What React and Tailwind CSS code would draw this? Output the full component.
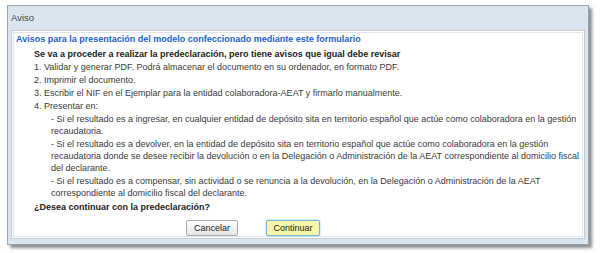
export default function App() {
  const f = { fontFamily: '"Liberation Sans", Arial, sans-serif' };
  return (
    <div className="w-[600px] h-[253px] bg-white overflow-hidden" style={f}>
      <div className="ml-[7px] mt-[5px] w-[582px] h-[240px] bg-[#dbe5ef] border border-[#9aa4ae] shadow-[3px_3px_3px_rgba(0,0,0,0.45)] flex flex-col">
        <div className="h-[25px] flex items-center pl-[3px] text-[9.5px] text-[#444]">Aviso</div>
        <div className="mx-[3px] flex-1 mb-[5px] bg-white border border-[#c3ccd6] p-[1px]">
          <div className="h-full border border-[#e2e6ea] flex flex-col text-[9px] leading-[12px] text-[#3a3a3a]">
            <div className="pl-[2px] font-bold text-[#1a5fcf]">Avisos para la presentación del modelo confeccionado mediante este formulario</div>
            <div className="pl-[20px] mt-[3px] font-bold text-[#222]">Se va a proceder a realizar la predeclaración, pero tiene avisos que igual debe revisar</div>
            <div className="pl-[20px] mt-[1px]">1. Validar y generar PDF. Podrá almacenar el documento en su ordenador, en formato PDF.</div>
            <div className="pl-[20px] mt-[1px]">2. Imprimir el documento.</div>
            <div className="pl-[20px] mt-[1px]">3. Escribir el NIF en el Ejemplar para la entidad colaboradora-AEAT y firmarlo manualmente.</div>
            <div className="pl-[20px] mt-[1px]">4. Presentar en:</div>
            <div className="pl-[37px] mt-[1px] whitespace-nowrap">- Si el resultado es a ingresar, en cualquier entidad de depósito sita en territorio español que actúe como colaboradora en la gestión<br />recaudatoria.</div>
            <div className="pl-[37px] mt-[1px] whitespace-nowrap">- Si el resultado es a devolver, en la entidad de depósito sita en territorio español que actúe como colaboradora en la gestión<br />recaudatoria donde se desee recibir la devolución o en la Delegación o Administración de la AEAT correspondiente al domicilio fiscal<br />del declarante.</div>
            <div className="pl-[37px] mt-[1px] whitespace-nowrap">- Si el resultado es a compensar, sin actividad o se renuncia a la devolución, en la Delegación o Administración de la AEAT<br />correspondiente al domicilio fiscal del declarante.</div>
            <div className="pl-[20px] mt-[2px] font-bold text-[#222]">¿Desea continuar con la predeclaración?</div>
            <div className="flex mt-[7px] pl-[172px] gap-[28px]">
              <button className="w-[52px] h-[16px] text-[9px] text-[#222] border border-[#a9a9a9] rounded-[2px] bg-gradient-to-b from-[#ffffff] to-[#e4e4e4] leading-none">Cancelar</button>
              <button className="w-[54px] h-[16px] text-[9px] text-[#222] border border-[#6fb6d8] rounded-[2px] bg-[#fbf5a9] shadow-[0_0_2px_#7cc4e4] leading-none">Continuar</button>
            </div>
          </div>
        </div>
      </div>
    </div>
  );
}
